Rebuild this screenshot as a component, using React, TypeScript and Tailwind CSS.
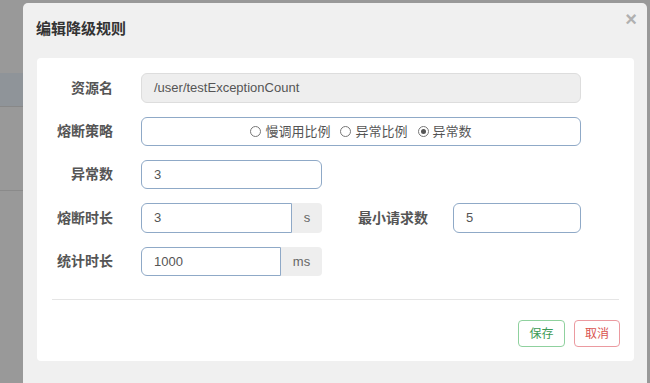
import React from "react";

const font = { fontFamily: '"Liberation Sans", "Noto Sans CJK SC", sans-serif' };

function Radio({ label, checked = false }: { label: string; checked?: boolean }) {
  return (
    <span className="flex items-center gap-[4px]">
      <span className="w-[11px] h-[11px] rounded-full border border-[#777] bg-white flex items-center justify-center">
        {checked && <span className="w-[5px] h-[5px] rounded-full bg-[#555]" />}
      </span>
      <span>{label}</span>
    </span>
  );
}

function Label({ children, className = "" }: { children: React.ReactNode; className?: string }) {
  return <div className={`text-[14px] font-bold text-[#555] text-right ${className}`}>{children}</div>;
}

export default function App() {
  return (
    <div className="relative w-[650px] h-[383px] bg-[#999] overflow-hidden" style={font}>
      {/* page behind the backdrop */}
      <div className="absolute left-0 top-[73px] w-[23px] h-[34px] bg-[#8f9499] border-b border-[#888]" />
      <div className="absolute left-0 top-[190px] w-[23px] h-px bg-[#8a8a8a]" />

      {/* modal */}
      <div className="absolute left-[23px] top-[3px] w-[624px] h-[390px] bg-[#f0f0f0] rounded-[5px]">
        <div className="h-[55px] flex items-center justify-between pl-[13px] pr-[10px]">
          <h4 className="text-[15px] font-bold text-[#333] -mt-[3px]">编辑降级规则</h4>
          <span className="text-[20px] font-bold text-[#b0b0b0] leading-none -mt-[24px]">×</span>
        </div>

        <div className="mx-[14px] mr-[13px] bg-white rounded-[4px] pt-[15px] pb-[14px]">
          <div className="flex flex-col gap-[14px] text-[13px] text-[#555]">
            <div className="flex items-center">
              <Label className="w-[76px] mt-px">资源名</Label>
              <div className="ml-[28px] w-[440px] h-[30px] bg-[#eee] border border-[#ddd] rounded-[6px] flex items-center pl-[12px] text-[#555]">
                /user/testExceptionCount
              </div>
            </div>

            <div className="flex items-center">
              <Label className="w-[76px]">熔断策略</Label>
              <div className="ml-[28px] w-[440px] h-[29px] border border-[#8fa9c7] rounded-[6px] flex items-center justify-center gap-[10px] text-[#555]">
                <Radio label="慢调用比例" />
                <Radio label="异常比例" />
                <Radio label="异常数" checked />
              </div>
            </div>

            <div className="flex items-center">
              <Label className="w-[76px]">异常数</Label>
              <div className="ml-[28px] w-[181px] h-[29px] border border-[#8fa9c7] rounded-[6px] flex items-center pl-[12px]">
                3
              </div>
            </div>

            <div className="flex items-center">
              <Label className="w-[76px]">熔断时长</Label>
              <div className="ml-[28px] flex h-[30px]">
                <div className="w-[151px] border border-[#8fa9c7] rounded-l-[6px] flex items-center pl-[12px]">3</div>
                <div className="w-[30px] bg-[#eee] rounded-r-[4px] flex items-center justify-center text-[#666]">s</div>
              </div>
              <Label className="ml-[35px] w-[71px]">最小请求数</Label>
              <div className="ml-[25px] w-[128px] h-[30px] border border-[#8fa9c7] rounded-[6px] flex items-center pl-[12px]">
                5
              </div>
            </div>

            <div className="flex items-center">
              <Label className="w-[76px]">统计时长</Label>
              <div className="ml-[28px] flex h-[29px]">
                <div className="w-[140px] border border-[#8fa9c7] rounded-l-[6px] flex items-center pl-[12px]">1000</div>
                <div className="w-[41px] bg-[#eee] rounded-r-[4px] flex items-center justify-center text-[#666]">ms</div>
              </div>
            </div>
          </div>

          <div className="mx-[15px] mt-[23px] h-px bg-[#e5e5e5]" />

          <div className="flex justify-end gap-[9px] mt-[20px] mr-[14px]">
            <button className="w-[47px] h-[27px] border border-[#8fd19e] rounded-[4px] text-[12px] text-[#3c9a55] bg-white">
              保存
            </button>
            <button className="w-[46px] h-[27px] border border-[#eb9aa0] rounded-[4px] text-[12px] text-[#d9534f] bg-white">
              取消
            </button>
          </div>
        </div>
      </div>
    </div>
  );
}
